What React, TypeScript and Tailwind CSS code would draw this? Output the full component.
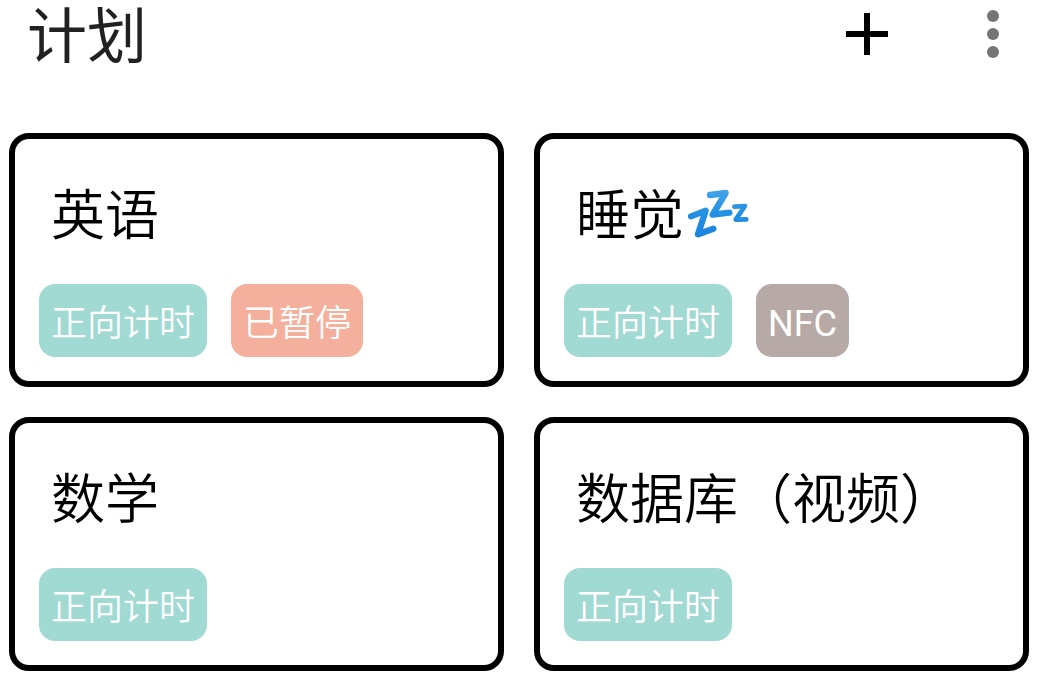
type Tag = { label: string; tone: string };
type Plan = { title: string; sleepy?: boolean; tags: Tag[] };

const countUp: Tag = { label: "正向计时", tone: "bg-[#a1d9d3] font-[350]" };
const paused: Tag = { label: "已暂停", tone: "bg-[#f4b09c] font-[350]" };
const nfc: Tag = { label: "NFC", tone: "bg-[#b7aaa6] font-normal" };

const plans: Plan[] = [
  { title: "英语", tags: [countUp, paused] },
  { title: "睡觉", sleepy: true, tags: [countUp, nfc] },
  { title: "数学", tags: [countUp] },
  { title: "数据库（视频）", tags: [countUp] },
];

function SleepIcon() {
  return (
    <svg
      role="img"
      aria-label="zzz"
      className="mt-2 self-start"
      width="62"
      height="49"
      viewBox="83 60 186 147"
      fill="none"
      strokeLinecap="round"
      strokeLinejoin="round"
    >
      <defs>
        <linearGradient id="zzz" gradientUnits="userSpaceOnUse" x1="0" y1="62" x2="0" y2="204">
          <stop offset="0" stopColor="#42a5e8" />
          <stop offset="0.5" stopColor="#2490e4" />
          <stop offset="1" stopColor="#1b83dd" />
        </linearGradient>
      </defs>
      <path d="M92 142 L136 125 L113 196 L159 179" stroke="url(#zzz)" strokeWidth="19" />
      <path d="M149 78 L196 72 L157 137 L207 131" stroke="url(#zzz)" strokeWidth="19" />
      <path d="M222 113 L254 111 L226 152 L258 151" stroke="url(#zzz)" strokeWidth="14" />
    </svg>
  );
}

function PlanCard({ plan }: { plan: Plan }) {
  return (
    <article className="rounded-[20px] border-[6px] border-black px-6 pt-[42px] pb-6">
      <h2 className="flex items-center gap-1 pl-3 text-[54px] leading-[72px] font-[350] whitespace-nowrap text-black">
        {plan.title}
        {plan.sleepy && <SleepIcon />}
      </h2>
      <ul className="mt-[31px] flex gap-6">
        {plan.tags.map((tag) => (
          <li
            key={tag.label}
            className={`rounded-2xl px-3 pt-3 pb-1 text-4xl leading-[57px] whitespace-nowrap text-white ${tag.tone}`}
          >
            {tag.label}
          </li>
        ))}
      </ul>
    </article>
  );
}

export default function App() {
  return (
    <main className="min-h-screen bg-white pb-4 font-['Roboto','Noto_Sans_CJK_SC',sans-serif]">
      <header className="flex items-start justify-between pr-[38px] pl-[27px]">
        <h1 className="pt-1 text-[60px] leading-[68px] font-normal text-[#212121]">计划</h1>
        <div className="flex h-[68px] items-center gap-[99px]">
          <button type="button" aria-label="添加" className="text-black">
            <svg width="42" height="42" viewBox="0 0 42 42" fill="currentColor" aria-hidden="true">
              <path d="M18 0h6v18h18v6H24v18h-6V24H0v-6h18z" />
            </svg>
          </button>
          <button type="button" aria-label="更多" className="text-[#757575]">
            <svg width="12" height="48" viewBox="0 0 12 48" fill="currentColor" aria-hidden="true">
              <circle cx="6" cy="6" r="6" />
              <circle cx="6" cy="24" r="6" />
              <circle cx="6" cy="42" r="6" />
            </svg>
          </button>
        </div>
      </header>
      <section className="mt-[61px] grid grid-cols-2 gap-[30px] pr-2 pl-[9px]">
        {plans.map((plan) => (
          <PlanCard key={plan.title} plan={plan} />
        ))}
      </section>
    </main>
  );
}
